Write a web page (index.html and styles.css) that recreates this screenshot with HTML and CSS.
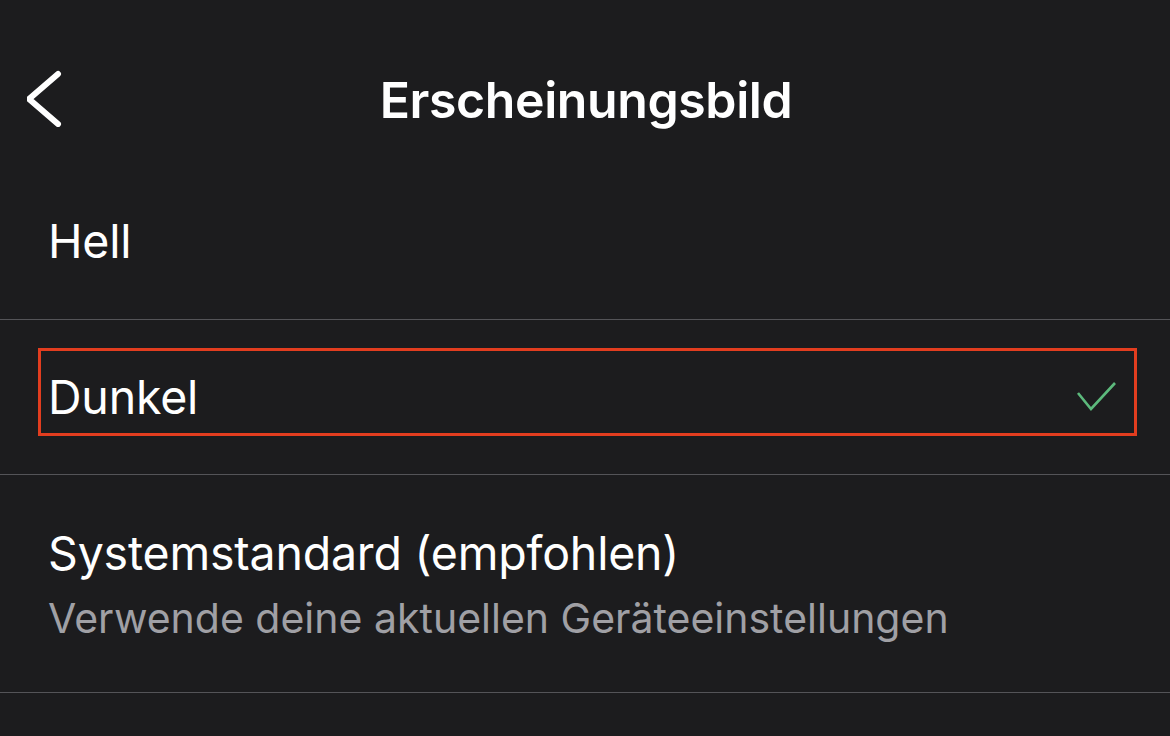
FILE: index.html
```html
<!DOCTYPE html>
<html lang="de">

<head>
    <meta charset="UTF-8">
    <meta name="viewport" content="width=device-width, initial-scale=1.0">
    <title>Erscheinungsbild</title>
    <link rel="stylesheet" href="styles.css">
</head>

<body>
    <div class="screen">
        <header class="nav-bar">
            <button class="back-btn" title="Zurück">
                <svg width="40" height="64" viewBox="0 0 40 64">
                    <polyline points="31,11 2,36 31,61" fill="none" stroke="#fff" stroke-width="6"
                        stroke-linecap="round" stroke-linejoin="round" />
                </svg>
            </button>
            <h1>Erscheinungsbild</h1>
        </header>

        <ul class="options">
            <li class="option option-light">
                <span class="option-label">Hell</span>
            </li>
            <li class="option option-dark">
                <span class="option-label">Dunkel</span>
                <svg class="check" width="44" height="34" viewBox="0 0 44 34">
                    <polyline points="3,13 16,29 40,3" fill="none" stroke="#5cb97c" stroke-width="2.6" />
                </svg>
                <div class="highlight"></div>
            </li>
            <li class="option option-system">
                <div class="option-text">
                    <span class="option-label">Systemstandard (empfohlen)</span>
                    <span class="option-hint">Verwende deine aktuellen Geräteeinstellungen</span>
                </div>
            </li>
        </ul>
    </div>
</body>

</html>
```

FILE: styles.css
```css
* {
    box-sizing: border-box;
    margin: 0;
    padding: 0;
}

body {
    font-family: Inter, "Noto Sans", sans-serif;
    background-color: #1c1c1e;
    color: #fff;
    width: 1170px;
    height: 736px;
    overflow: hidden;
}

.nav-bar {
    position: relative;
    height: 163px;
    padding-top: 70px;
    display: flex;
    align-items: flex-start;
    justify-content: center;
}

.back-btn {
    position: absolute;
    left: 27px;
    top: 63px;
    background: none;
    border: none;
    display: flex;
}

h1 {
    font-size: 50px;
    line-height: 60px;
    font-weight: 600;
    letter-spacing: -0.4px;
    margin-left: 2px;
}

.options {
    list-style: none;
}

.option {
    position: relative;
    display: flex;
    align-items: center;
    padding: 0 50px 0 48px;
    border-bottom: 1px solid #545458;
}

.option-light {
    height: 157px;
}

.option-dark {
    height: 155px;
}

.option-system {
    height: 218px;
}

.option-label {
    font-size: 46.5px;
    letter-spacing: -0.2px;
}

.option-text {
    display: flex;
    flex-direction: column;
    gap: 12px;
}

.option-hint {
    font-size: 41px;
    color: #a0a0a5;
}

.check {
    margin-left: auto;
    margin-right: 1px;
}

.highlight {
    position: absolute;
    left: 38px;
    top: 28px;
    right: 33px;
    bottom: 38px;
    border: 3px solid #e23d1f;
}
```
